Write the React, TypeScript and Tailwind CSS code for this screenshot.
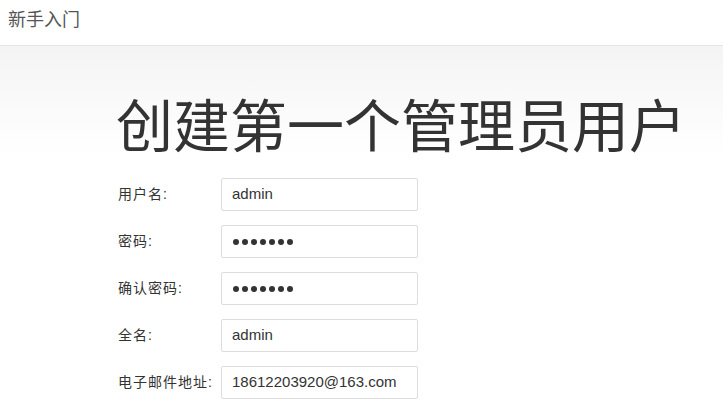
export default function App() {
  const rows = [
    { label: "用户名:", value: "admin", pw: false },
    { label: "密码:", value: "", pw: true },
    { label: "确认密码:", value: "", pw: true },
    { label: "全名:", value: "admin", pw: false },
    { label: "电子邮件地址:", value: "18612203920@163.com", pw: false },
  ];

  return (
    <div className="w-[723px] h-[409px] overflow-hidden bg-white font-['Liberation_Sans','Noto_Sans_CJK_SC',sans-serif] text-[#333]">
      {/* Top bar */}
      <div className="h-[46px] border-b border-[#e5e5e5] px-[8px] pt-[7px]">
        <span className="text-[18px] text-[#555] leading-[26px]">新手入门</span>
      </div>

      <div className="h-[363px] bg-gradient-to-b from-[#f4f4f4] to-white to-[30%] pl-[116px]">
        <h1 className="pt-[46px] text-[57px] leading-[70px] font-normal text-[#333]">
          创建第一个管理员用户
        </h1>

        <div className="mt-[16px] flex flex-col gap-[14px]">
          {rows.map((r) => (
            <div key={r.label} className="flex items-center">
              <span className="w-[105px] pl-[2px] text-[14px] tracking-[1px] text-[#333]">{r.label}</span>
              <div className="w-[197px] h-[33px] bg-white border border-[#ddd] rounded-[2px] flex items-center pl-[10px] text-[15px] text-[#333]">
                {r.pw ? (
                  <div className="flex gap-[3px] pl-[1px] pt-[1px]">
                    {Array.from({ length: 7 }).map((_, i) => (
                      <span key={i} className="w-[6px] h-[6px] rounded-full bg-[#333]" />
                    ))}
                  </div>
                ) : (
                  r.value
                )}
              </div>
            </div>
          ))}
        </div>
      </div>
    </div>
  );
}
